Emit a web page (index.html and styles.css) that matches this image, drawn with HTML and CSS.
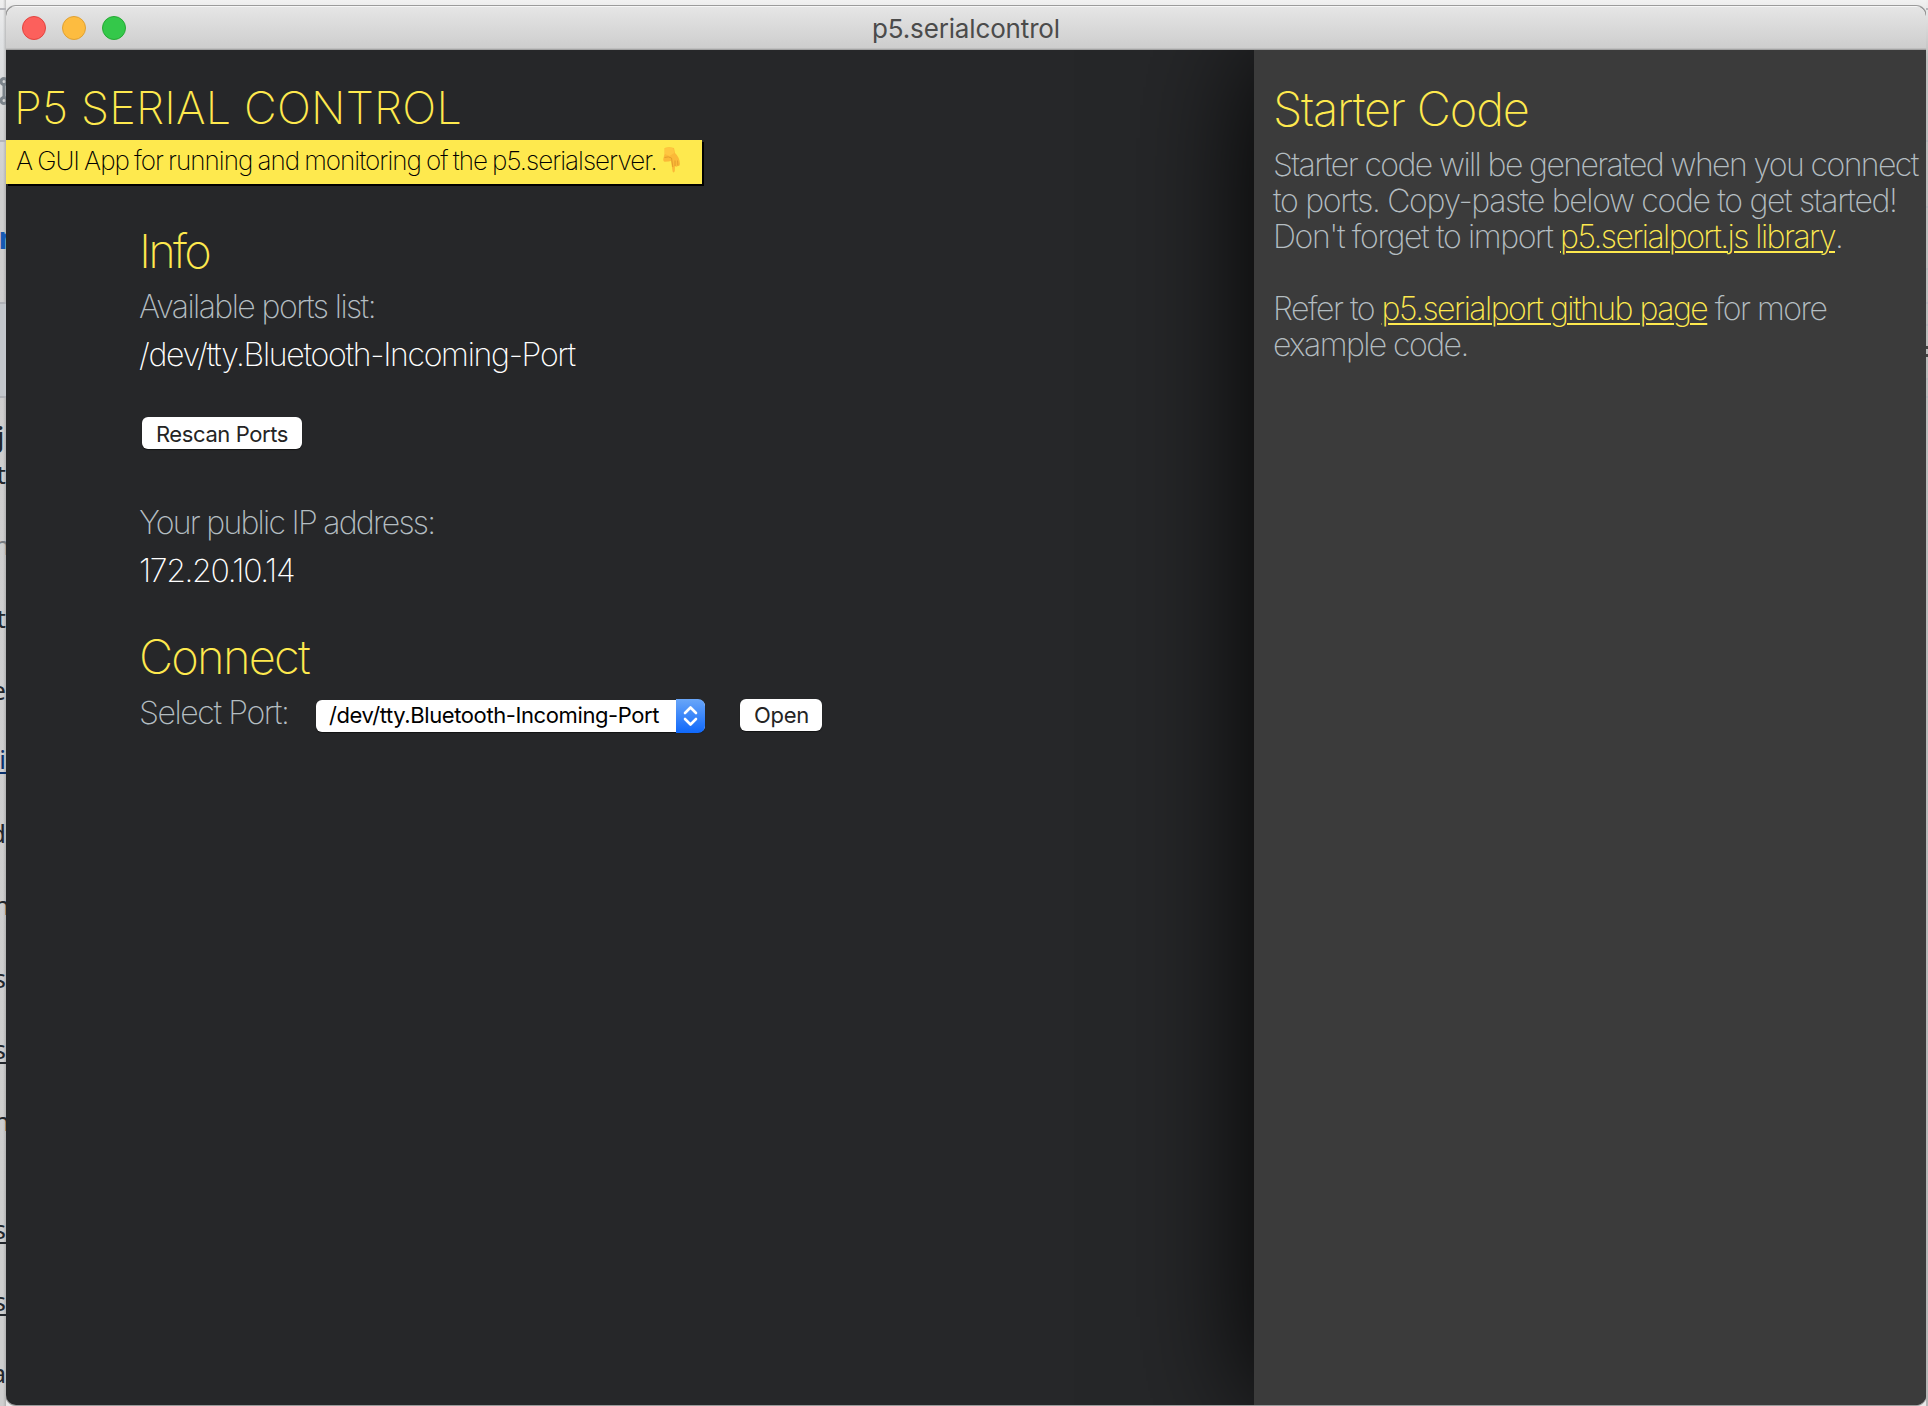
FILE: index.html
```html
<!DOCTYPE html>
<html lang="en">
<head>
<meta charset="utf-8">
<title>p5.serialcontrol</title>
<link rel="stylesheet" href="styles.css">
</head>
<body>
<div class="desktop left" aria-hidden="true">
  <svg class="branch" width="12" height="30" viewBox="0 0 12 30"><g fill="none" stroke="#7b838a" stroke-width="3"><circle cx="9" cy="4.500" r="3"/><circle cx="9" cy="23.500" r="3"/><path d="M9 8v12M0 4h3M0 25h3"/></g></svg>
  <i class="rule" style="top:8px"></i><i class="rule" style="top:140px"></i>
  <i class="band"></i>
  <b class="link" style="top:222px">n</b>
  <b style="top:421px">j</b>
  <span style="top:458px">t</span>
  <span class="dim wide" style="top:529px">n</span>
  <span style="top:602px">t</span>
  <span style="top:674px">e</span>
  <u class="navy" style="top:743px">i</u>
  <span style="top:817px">d</span>
  <span class="wide" style="top:889px">n</span>
  <span style="top:962px">s</span>
  <u style="top:1033px">s</u>
  <span class="wide" style="top:1105px">n</span>
  <u style="top:1213px">s</u>
  <u style="top:1285px">s</u>
  <span style="top:1357px">a</span>
</div>
<div class="desktop right" aria-hidden="true">
  <i class="rule" style="top:8px"></i><i class="rule" style="top:140px"></i><i class="rule" style="top:206px"></i><i class="rule" style="top:268px"></i><i class="rule" style="top:302px"></i><i class="rule" style="top:324px"></i>
  <i class="dot" style="top:346px"></i><i class="dot" style="top:354px"></i>
  <i class="rule" style="top:378px"></i><i class="rule" style="top:396px"></i>
</div>
<div class="window">
  <header class="titlebar">
    <div class="lights"><i class="red"></i><i class="amber"></i><i class="green"></i></div>
    <span class="title">p5.serialcontrol</span>
  </header>
  <div class="content">
    <main class="main">
      <h1>P5 SERIAL CONTROL</h1>
      <p class="banner"><span>A GUI App for running and monitoring of the p5.serialserver.</span>
        <svg width="18" height="27" viewBox="0 0 18 27"><path d="M1.500 1Q6-.3 11 1l1 5q4.500 4 5 11-.2 2.600-2.200 2-1.300 1.300-2.800.3l-.2 4.700q-.8 2.500-2.200.5L8 14q-2 .5-6.500.8Q-.3 14 .5 11l1-4z" fill="#fbb938"/><path d="M2 1.300q4-1.300 8.500 0l.7 4.700-4.700 3-4.500-2z" fill="#ffc640"/><path d="M1.500 10.500q4-1.500 7 .5l1.300 9M12 13.500v5.500M14.600 13.500l.3 5" fill="none" stroke="#e09a2a" stroke-width=".9"/></svg>
      </p>
      <section class="info">
        <h2 class="t-info">Info</h2>
        <p class="t-avail">Available ports list:</p>
        <p class="value t-dev">/dev/tty.Bluetooth-Incoming-Port</p>
        <button class="btn rescan">Rescan Ports</button>
        <p class="t-ip">Your public IP address:</p>
        <p class="value t-num">172.20.10.14</p>
        <h2 class="t-connect">Connect</h2>
        <div class="row">
          <p class="t-select">Select Port:</p>
          <div class="select"><span>/dev/tty.Bluetooth-Incoming-Port</span>
            <div class="arrows"><svg width="29" height="34" viewBox="0 0 29 34"><path d="M9 14l5.500-5.500L20 14M9 20l5.500 5.500L20 20" fill="none" stroke="#fff" stroke-width="2.600" stroke-linecap="round" stroke-linejoin="round"/></svg></div>
          </div>
          <button class="btn open">Open</button>
        </div>
      </section>
    </main>
    <aside class="side">
      <h2 class="t-starter">Starter Code</h2>
      <p class="code"><span class="l1">Starter code will be generated when you connect</span><br><span class="l2">to ports. Copy-paste below code to get started!</span><br><span class="l3">Don't forget to import <a>p5.serialport.js library</a>.</span></p>
      <p class="code"><span class="l4">Refer to <a>p5.serialport github page</a> for more</span><br><span class="l5">example code.</span></p>
    </aside>
  </div>
</div>
</body>
</html>
```
FILE: styles.css
```css
* { box-sizing: border-box; margin: 0; padding: 0; }
body {
  width: 1928px; height: 1406px; overflow: hidden; position: relative;
  padding: 6px 2px 0 6px;
  background: linear-gradient(#f1f1f1, #e9e9e9 10px);
  font-family: Inter, "Liberation Sans", sans-serif;
  font-weight: 150;
}

/* slivers of the page behind the window */
.desktop { position: absolute; top: 0; height: 1406px; overflow: hidden; }
.left { left: 0; width: 6px; background: linear-gradient(90deg, transparent 3px, #9998 6px), linear-gradient(#efefef, #e0e2e4 40px, #cfcfcf 180px, #cecece); }
.right { right: 0; width: 2px; background: linear-gradient(#efefef, #bdbdbd 60px, #b5b5b5); }
.desktop > * { position: absolute; }
.desktop b, .desktop span, .desktop u {
  right: 0; font: 400 26px/32px "Noto Sans", sans-serif; color: #22262b;
}
.desktop u { text-underline-offset: 3px; text-decoration-thickness: 2px; }
.desktop b { font-weight: 700; right: 2px; }
.desktop .wide { right: -4px; }
.desktop .link { color: #1559b3; right: -12px; font-size: 30px; }
.desktop .dim { color: #777b80; }
.desktop .navy { color: #08306b; }
.branch { left: -5px; top: 77px; }
.rule { left: 0; width: 6px; height: 2px; background: #b4b5ba; }
.band { left: 0; top: 302px; width: 6px; height: 96px; background: #c4c8cd; border: solid #b0b2b8; border-width: 2px 0; }
.dot { right: 0; width: 2px; height: 3px; background: #444; }

.window {
  width: 1920px; height: 1399px; border-radius: 10px; overflow: hidden;
  background: #262729; box-shadow: 0 0 0 1px #9b9b9b;
}
.titlebar {
  height: 44px; position: relative; display: flex; align-items: center; justify-content: center;
  background: linear-gradient(#e6e6e6, #cdcdcd);
  border-bottom: 1px solid #a3a3a3;
  box-shadow: inset 0 1px #f6f6f6, inset 0 -1px #bebebe;
}
.lights { position: absolute; left: 16px; top: 10px; display: flex; gap: 16px; }
.lights i { width: 24px; height: 24px; border-radius: 50%; border: 1px solid; }
.red { background: #fc605c; border-color: #e2443f !important; }
.amber { background: #fdbc40; border-color: #dfa033 !important; }
.green { background: #34c84a; border-color: #26a934 !important; }
.title { font-size: 26px; font-weight: 400; line-height: 36px; letter-spacing: -.15px; color: #4b4b4b; padding-top: 3px; }

.content { height: 1355px; display: flex; }
.main { width: 1248px; padding-top: 33px; }
h1, h2 { color: #fee94e; font-weight: 150; }
h1 { font-size: 45px; line-height: 50px; padding-left: 8px; letter-spacing: .2px; }
h2 { font-size: 47px; line-height: 56px; }
.banner {
  width: 696px; height: 44px; margin-top: 7px; padding: 0 21px 0 10px;
  display: flex; justify-content: space-between; align-items: flex-start;
  background: #fee94e; color: #000; box-shadow: 2px 2px #000;
  font-size: 26px; line-height: 41px; letter-spacing: -.97px; word-spacing: -1.3px; white-space: nowrap;
}
.banner svg { margin-top: 7px; }
.info { padding: 39px 0 0 133px; }
.info p { font-size: 32px; line-height: 48px; color: #b4bdc1; white-space: nowrap; }
.info h2 + p { margin-top: 4px; }
.info p.value { color: #fff; }
.btn {
  display: block; height: 32px; border: 0; border-radius: 6px; background: #fff; color: #242424;
  font: 400 22px/32px Inter, sans-serif; box-shadow: 0 1px 1px #0008; text-align: center; white-space: nowrap;
}
.rescan { width: 160px; margin: 38px 0 50px 3px; padding-top: 1px; letter-spacing: -.4px; }
.t-info { letter-spacing: -2.8px; }
.t-avail { letter-spacing: -1.57px; }
.t-dev { letter-spacing: -1.3px; }
.t-ip { letter-spacing: -1.74px; }
.t-num { letter-spacing: -1.35px; }
.info .t-connect { letter-spacing: -1.75px; margin-top: 34px; }
.row { display: flex; align-items: flex-start; margin-top: 3px; }
.row .t-select { width: 177px; letter-spacing: -1.4px; margin-top: 1px; }
.select {
  width: 389px; height: 32px; margin-top: 12px; display: flex; justify-content: space-between;
  background: #fff; border-radius: 6px; color: #000; padding-left: 13px; box-shadow: 0 1px 1px #0008;
  font-size: 22px; font-weight: 400; line-height: 31px; letter-spacing: -.4px;
}
.arrows { width: 29px; height: 34px; margin-top: -1px; border-radius: 0 7px 7px 0; background: linear-gradient(#69a6f8, #0f68fb); }
.arrows svg { display: block; }
.open { width: 82px; margin: 11px 0 0 35px; padding-left: 1px; letter-spacing: -.3px; }

.side { width: 672px; padding: 31px 0 0 19px; background: #3b3b3b; box-shadow: 0 0 120px #000; }
.t-starter { letter-spacing: -1.15px; margin-bottom: 10px; }
.code { font-size: 32px; line-height: 36px; color: #b4bdc1; white-space: nowrap; margin-bottom: 36px; }
.code a { color: #fee94e; text-decoration: underline; text-decoration-thickness: 2px; text-underline-offset: 3px; }
.l1 { letter-spacing: -1.6px; }
.l2 { letter-spacing: -1.34px; }
.l3 { letter-spacing: -1.38px; }
.l3 a { letter-spacing: -1.55px; }
.l4 { letter-spacing: -1.51px; }
.l5 { letter-spacing: -1.58px; }
```
